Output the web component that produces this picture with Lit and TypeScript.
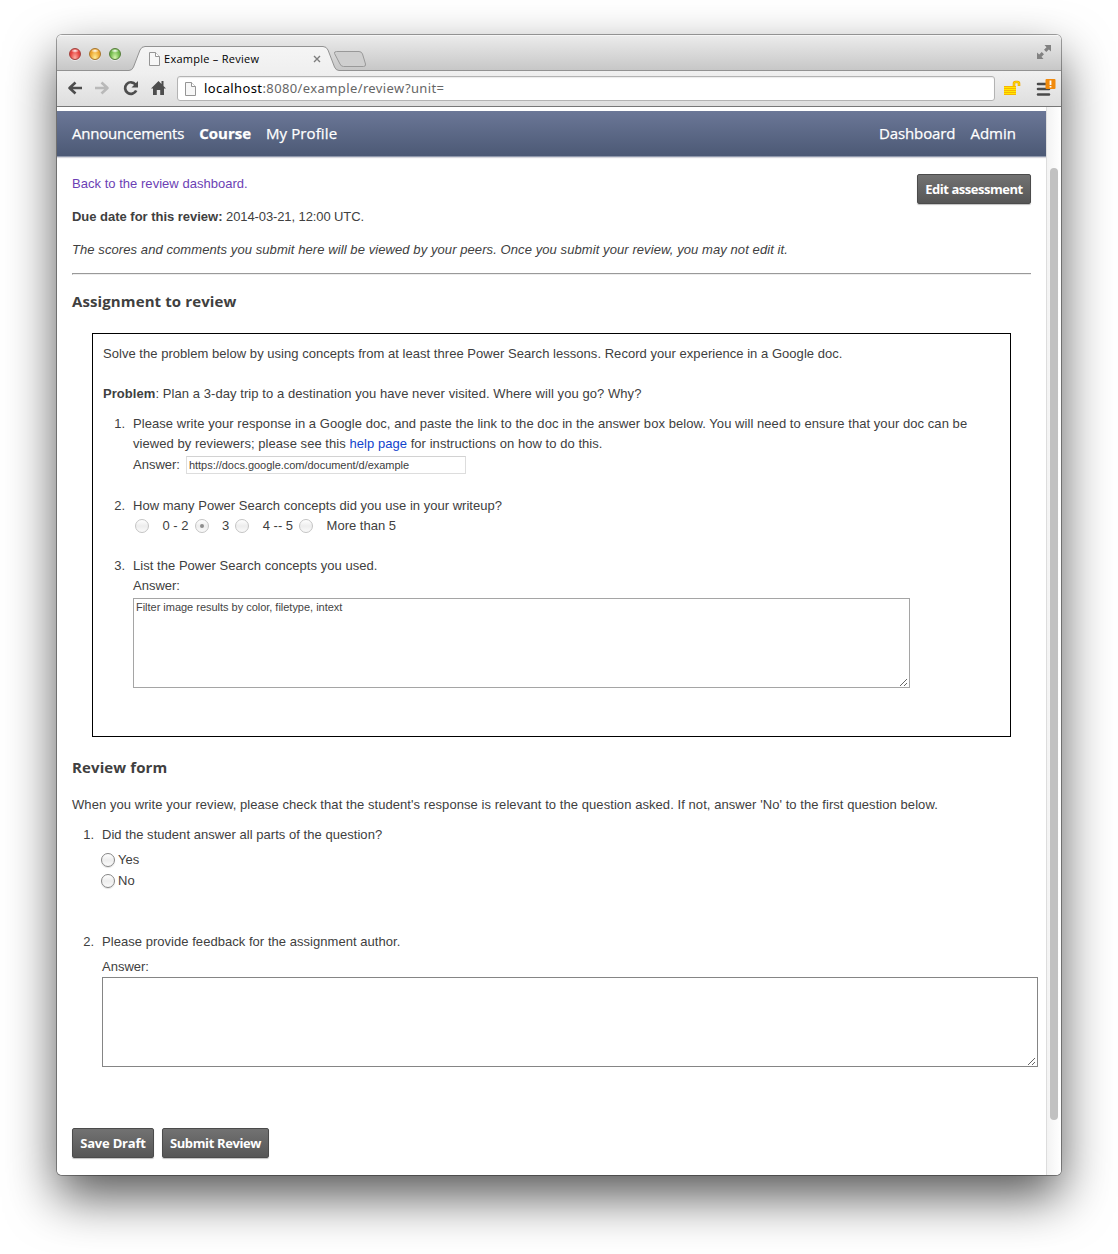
import { LitElement, html, css } from "lit";
import { customElement, property } from "lit/decorators.js";

@customElement("sheet-icon")
class SheetIcon extends LitElement {
  static styles = css`:host { display: block; height: 15px; } svg { display: block; }`;
  render() {
    return html`<svg width="12" height="15" viewBox="0 0 12 15"><path d="M.5 1.500H6.500L10.500 5.500V14.500H.5Z" fill="#f7f7f7" stroke="#959595"/><path d="M6.500 1.500V5.500H10.500" fill="#fff" stroke="#959595"/></svg>`;
  }
}

@customElement("mac-radio")
class MacRadio extends LitElement {
  @property({ type: Boolean }) checked = false;
  @property({ type: Boolean }) muted = false;
  static styles = css`
    :host { display: block; width: 14px; height: 14px; flex: none; }
    .dot { box-sizing: border-box; width: 14px; height: 14px; border: 1px solid #858585; border-radius: 50%; background: linear-gradient(#fff, #ededed 50%, #fafafa); box-shadow: 0 1px 1px rgba(0,0,0,.12); display: grid; place-items: center; }
    .muted { border-color: #c4c4c4; box-shadow: none; }
    .on { width: 4px; height: 4px; border-radius: 50%; background: #8d8d8d; }
  `;
  render() {
    return html`<div class="dot ${this.muted ? "muted" : ""}">${this.checked ? html`<div class="on"></div>` : ""}</div>`;
  }
}

@customElement("app-root")
class AppRoot extends LitElement {
  static styles = css`
    :host { display: block; width: 1118px; height: 1254px; overflow: hidden; background: #fff; font: 13px/20px "Liberation Sans", Arial, sans-serif; color: #404040; }
    * { box-sizing: border-box; }
    svg { display: block; flex: none; }
    .desk { padding: 35px 57px 0; height: 1254px; }
    .window { width: 1004px; height: 1140px; border-radius: 5px; background: #fff; overflow: hidden; display: flex; flex-direction: column; }
    .shade { width: 1004px; height: 1140px; border-radius: 5px; box-shadow: 0 0 0 1px rgba(0,0,0,.35), 0 22px 50px rgba(0,0,0,.66); }
    .tabs { height: 36px; flex: none; background: linear-gradient(#ebebeb, #c6c6c6); border-top: 1px solid #f6f6f6; display: flex; position: relative; }
    .lights { display: flex; gap: 8px; padding: 12px 0 0 12px; width: 75px; flex: none; }
    .light { width: 12px; height: 12px; border-radius: 50%; border: 1px solid; box-shadow: 0 1px 0 rgba(255,255,255,.5); }
    .red { background: radial-gradient(ellipse 4px 2px at 50% 18%, #fff, transparent), radial-gradient(ellipse at 50% 90%, #ffb0a4, #e6423e 65%); border-color: #a2403c; }
    .amber { background: radial-gradient(ellipse 4px 2px at 50% 18%, #fff, transparent), radial-gradient(ellipse at 50% 90%, #ffee9a, #eda62f 65%); border-color: #a8752a; }
    .green { background: radial-gradient(ellipse 4px 2px at 50% 18%, #fff, transparent), radial-gradient(ellipse at 50% 90%, #d8f8b0, #71b94c 65%); border-color: #557d3a; }
    .tabshape { position: absolute; left: 0; top: 0; }
    .tab { position: relative; display: flex; align-items: center; width: 189px; padding: 11px 0 0 17px; height: 34px; font: 11px/16px "Open Sans", sans-serif; color: #000; }
    .tabtitle { margin-left: 3px; flex: 1; white-space: nowrap; letter-spacing: .27px; }
    .full { position: absolute; right: 10px; top: 9px; }
    .bar { height: 36px; flex: none; background: linear-gradient(#f0f0f0, #dedede); border-bottom: 1px solid #777; display: flex; align-items: center; padding: 0 0 0 9px; }
    .lift { margin-top: -1px; }
    .url { margin-left: -1px; width: 818px; flex: none; height: 25px; border: 1px solid #b3b3b3; border-radius: 3px; background: #fff; display: flex; align-items: center; padding: 0 0 1px 7px; font: 13px/22px "Noto Sans", "Open Sans", sans-serif; color: #666; box-shadow: inset 0 1px 1px rgba(0,0,0,.08); }
    .addr { margin: -1px 0 0 7px; letter-spacing: .39px; }
    .addr b { font-weight: 400; color: #000; }
    .extras { margin-left: 7px; }
    .view { flex: 1; display: flex; min-height: 0; }
    .page { width: 989px; flex: none; display: flex; flex-direction: column; }
    .nav { margin-top: 4px; height: 46px; flex: none; background: linear-gradient(#6b7797, #4c5975); border-bottom: 1px solid #8f98ac; box-shadow: 0 1px 1px #d9d9df; display: flex; gap: 15px; padding: 12px 30px 0 15px; color: #fff; font: 15px/21px "Open Sans", sans-serif; white-space: nowrap; -webkit-text-stroke: .25px #fff; }
    .ann { letter-spacing: -.21px; }
    .prof { letter-spacing: .1px; }
    .dash { letter-spacing: -.1px; }
    .grow { flex: 1; }
    .body { padding: 17px 15px 0; }
    .row { display: flex; }
    .btn { height: 30px; border: 1px solid #4b4b4b; border-radius: 2px; background: linear-gradient(#727272, #565656); color: #fff; font: 700 13px/28px "Open Sans", sans-serif; letter-spacing: -.22px; text-align: center; box-shadow: 0 1px 1px rgba(0,0,0,.25); white-space: nowrap; }
    .edit { width: 114px; letter-spacing: -.46px; }
    .save { width: 82px; letter-spacing: -.2px; }
    .submit { width: 107px; letter-spacing: -.38px; }
    .t { white-space: nowrap; }
    .visited { color: #6c3fb4; letter-spacing: .03px; }
    .due { margin-top: 3px; letter-spacing: -.02px; }
    .due span { letter-spacing: -.1px; }
    .note { margin-top: 13px; letter-spacing: .084px; }
    .solve { letter-spacing: .037px; }
    .problem { margin-top: 20px; letter-spacing: .065px; }
    .write { letter-spacing: .057px; }
    .viewed { letter-spacing: .05px; }
    .q { letter-spacing: .04px; }
    .q2 { letter-spacing: .02px; }
    .when { margin-top: 17px; letter-spacing: .066px; }
    .link { color: #1143cc; }
    .rule { height: 2px; margin-top: 13px; border-top: 1px solid #999; border-bottom: 1px solid #eee; border-left: 1px solid #999; }
    .h { font: 700 15px/22px "Open Sans", sans-serif; white-space: nowrap; margin-top: 15px; letter-spacing: .11px; }
    .h.form { margin-top: 19px; }
    .box { margin: 21px 20px 0; height: 404px; border: 1px solid #000; padding: 10px; }
    .item { display: grid; grid-template-columns: 22px 1fr; column-gap: 8px; margin-top: 10px; }
    .item.b { margin-top: 21px; }
    .item.c { margin-top: 20px; }
    .item.d { margin-top: 41px; }
    .num { text-align: right; }
    .answer { display: flex; margin-top: 1px; }
    .field { width: 280px; height: 18px; border: 1px solid #ddd; border-top-color: #d2d2d2; margin: 1px 0 0 6px; font-size: 11px; line-height: 16px; padding-left: 2px; white-space: nowrap; letter-spacing: -.03px; }
    .opts { display: flex; align-items: center; height: 20px; padding-left: 2px; white-space: nowrap; }
    .opts span { margin: 0 6px 0 13.500px; }
    .pick { display: flex; align-items: center; gap: 3px; margin: 1px 0 0 -1px; }
    .pick.first { margin-top: 5px; }
    .area { border: 1px solid #a5a5a5; height: 90px; display: flex; justify-content: space-between; font-size: 11px; line-height: 16px; padding: 0 0 0 2px; color: #444; letter-spacing: -.02px; }
    .small { width: 777px; margin-top: 2px; }
    .large { width: 936px; border-color: #858585; }
    .lower { margin-top: 5px; }
    .actions { display: flex; gap: 8px; margin-top: 61px; }
    .grip { align-self: flex-end; }
    .track { flex: 1; border-left: 1px solid #ddd; background: linear-gradient(90deg, #f3f3f3, #fff); padding: 61px 0 0 3px; }
    .thumb { width: 8px; height: 952px; border-radius: 4px; background: #c1c1c1; }
  `;

  private grip() {
    return html`<svg class="grip" width="9" height="9" viewBox="0 0 9 9" stroke="#555" stroke-width=".9"><path d="M0 8L7 1M4 8L7 5"/></svg>`;
  }

  render() {
    return html`<div class="desk"><div class="shade"><div class="window">
      <div class="tabs">
        <svg class="tabshape" width="1004" height="36" viewBox="0 0 1004 36">
          <defs><linearGradient id="tg" x2="0" y2="1"><stop stop-color="#f5f5f5"/><stop offset="1" stop-color="#efefef"/></linearGradient></defs>
          <path d="M-2 34.500H72Q75 34.500 76.500 31L83 14Q84.500 10.500 88 10.500H266Q269.500 10.500 271 14L277.500 31Q279 34.500 282 34.500H1006V37H-2Z" fill="url(#tg)" stroke="#929292"/>
          <path d="M279.500 15.500H302Q304.500 15.500 305.500 18L308.500 28Q309 30.500 306.500 30.500H286.500Q284 30.500 283 28L277.500 17.500Q277 15.500 279.500 15.500Z" fill="#cfcfcf" stroke="#999"/>
        </svg>
        <div class="lights"><div class="light red"></div><div class="light amber"></div><div class="light green"></div></div>
        <div class="tab"><sheet-icon></sheet-icon><span class="tabtitle">Example – Review</span>
          <svg width="8" height="8" viewBox="0 0 8 8"><path d="M1 1L7 7M7 1L1 7" stroke="#7d7d7d" stroke-width="1.400"/></svg></div>
        <svg class="full" width="14" height="14" viewBox="0 0 14 14" fill="#828282"><path d="M7.500 0H14V6.500L11.800 4.500L9.300 7L7 4.700L9.500 2.200ZM0 7.500L2.200 9.500L4.700 7L7 9.300L4.500 11.800L6.500 14H0Z"/></svg>
      </div>
      <div class="bar">
        <svg class="lift" width="112" height="26" viewBox="0 0 112 26" fill="none">
          <path d="M16 13H4M9.500 7.500L3.500 13L9.500 18.500" stroke="#4d4d4d" stroke-width="2.600" stroke-linejoin="round"/>
          <path d="M29 13H41M35.500 7.500L41.500 13L35.500 18.500" stroke="#b9b9b9" stroke-width="2.600" stroke-linejoin="round"/>
          <path d="M69.500 9.500A5.800 5.800 0 1 0 70.200 15.500" stroke="#4d4d4d" stroke-width="2.700"/><path d="M72 6V12.500H65.500Z" fill="#4d4d4d"/>
          <path d="M92.500 6L85 13.500H87V20H90.800V15H94.200V20H98V13.500H100L97.500 11V6H95.500V9Z" fill="#4d4d4d"/>
        </svg>
        <div class="url"><sheet-icon></sheet-icon><span class="addr"><b>localhost</b>:8080/example/review?unit=</span></div>
        <svg class="extras" width="56" height="26" viewBox="0 0 56 26">
          <path d="M12 11V7.500Q12 6 13.500 6H15.500Q17 6 17 7.500V10" stroke="#f0a800" stroke-width="2.600" fill="none"/>
          <path d="M12 11V7.500Q12 6 13.500 6H15.500Q17 6 17 7.500V9.500" stroke="#ffe800" stroke-width="1" fill="none"/>
          <path d="M2 10H14V19H2Z" fill="#ffe800"/><path d="M2 10.500H14M2 12.500H14M2 14.500H14M2 16.500H14M2 18.500H14" stroke="#f8b400"/>
          <path d="M36 8H46M36 13H47M36 18.500H47" stroke="#4a4a4a" stroke-width="2.600" stroke-linecap="round"/>
          <rect x="43.500" y="3" width="10" height="10" rx="1" fill="#f08a0c"/><path d="M48.500 4.500V9M48.500 10V11.500" stroke="#fff" stroke-width="1.800"/>
        </svg>
      </div>
      <div class="view">
        <div class="page">
          <div class="nav"><span class="ann">Announcements</span><b>Course</b><span class="prof">My Profile</span><span class="grow"></span><span class="dash">Dashboard</span><span>Admin</span></div>
          <div class="body">
            <div class="row"><div class="t visited">Back to the review dashboard.</div><div class="grow"></div><div class="btn edit">Edit assessment</div></div>
            <div class="t due"><b>Due date for this review:</b><span> 2014-03-21, 12:00 UTC.</span></div>
            <div class="t note"><i>The scores and comments you submit here will be viewed by your peers. Once you submit your review, you may not edit it.</i></div>
            <div class="rule"></div>
            <div class="h">Assignment to review</div>
            <div class="box">
              <div class="t solve">Solve the problem below by using concepts from at least three Power Search lessons. Record your experience in a Google doc.</div>
              <div class="t problem"><b>Problem</b>: Plan a 3-day trip to a destination you have never visited. Where will you go? Why?</div>
              <div class="item"><div class="num">1.</div><div>
                <div class="t write">Please write your response in a Google doc, and paste the link to the doc in the answer box below. You will need to ensure that your doc can be</div>
                <div class="t viewed">viewed by reviewers; please see this <span class="link">help page</span> for instructions on how to do this.</div>
                <div class="answer"><span>Answer:</span><div class="field">https://docs.google.com/document/d/example</div></div>
              </div></div>
              <div class="item b"><div class="num">2.</div><div>
                <div class="t q2">How many Power Search concepts did you use in your writeup?</div>
                <div class="opts"><mac-radio muted></mac-radio><span>0 - 2</span><mac-radio muted checked></mac-radio><span>3</span><mac-radio muted></mac-radio><span>4 -- 5</span><mac-radio muted></mac-radio><span>More than 5</span></div>
              </div></div>
              <div class="item c"><div class="num">3.</div><div>
                <div class="t q">List the Power Search concepts you used.</div><div>Answer:</div>
                <div class="area small"><span>Filter image results by color, filetype, intext</span>${this.grip()}</div>
              </div></div>
            </div>
            <div class="h form">Review form</div>
            <div class="t when">When you write your review, please check that the student's response is relevant to the question asked. If not, answer 'No' to the first question below.</div>
            <div class="item"><div class="num">1.</div><div>
              <div class="t q">Did the student answer all parts of the question?</div>
              <div class="pick first"><mac-radio></mac-radio><span>Yes</span></div>
              <div class="pick"><mac-radio></mac-radio><span>No</span></div>
            </div></div>
            <div class="item d"><div class="num">2.</div><div>
              <div class="t q">Please provide feedback for the assignment author.</div><div class="lower">Answer:</div>
              <div class="area large"><span></span>${this.grip()}</div>
            </div></div>
            <div class="actions"><div class="btn save">Save Draft</div><div class="btn submit">Submit Review</div></div>
          </div>
        </div>
        <div class="track"><div class="thumb"></div></div>
      </div>
    </div></div></div>`;
  }
}
